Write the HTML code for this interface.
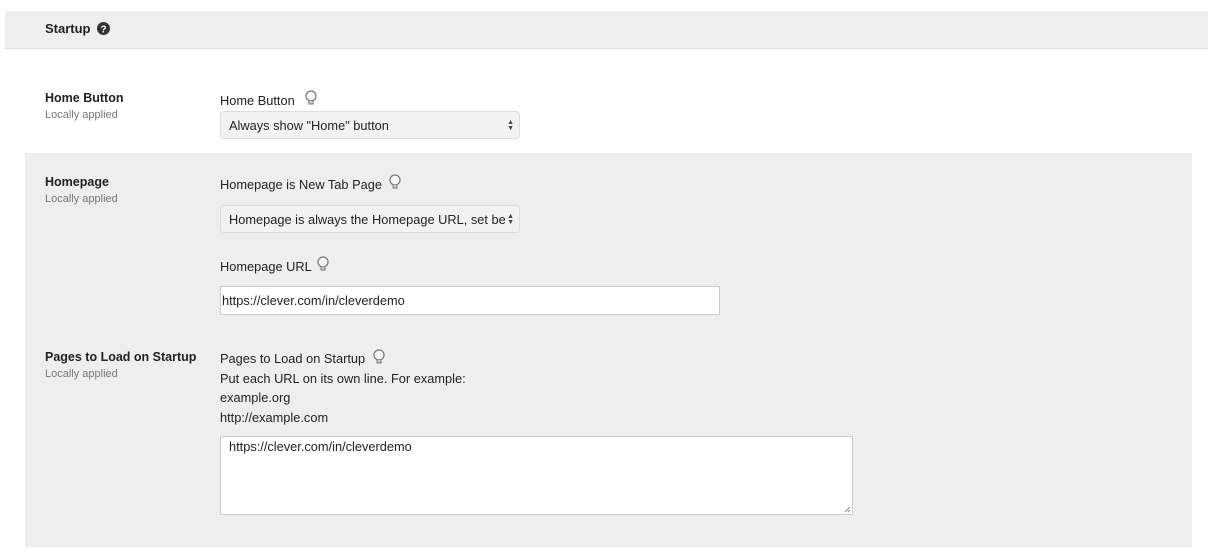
<!DOCTYPE html>
<html><head><meta charset="utf-8"><style>
*{margin:0;padding:0;box-sizing:border-box}
body{width:1208px;height:558px;background:#fff;font-family:"Liberation Sans",Arial,sans-serif;color:#222;position:relative;overflow:hidden;font-size:12.8px}
.a{position:absolute;white-space:nowrap}
.hdr{position:absolute;left:5px;top:11px;width:1203px;height:38px;background:#eee;border-bottom:1px solid #ddd}
.gray{position:absolute;left:25px;top:153px;width:1167px;height:394px;background:#eee}
.lbl{font-weight:bold;font-size:12.5px;color:#222}
.sub{font-size:11px;color:#777}
.sel{position:absolute;left:220px;width:300px;height:28px;background:#f2f2f2;border:1px solid #ddd;border-radius:4px;font-size:12.8px;white-space:nowrap}
.sel .t{position:absolute;left:8px;top:6px;width:276px;overflow:hidden}
.arr{position:absolute;right:5px;top:8px;font-size:7px;line-height:6px;color:#444}
.inp{position:absolute;background:#fff;border:1px solid #ccc;font-size:12.8px;padding:6px 1px}
</style></head><body>
<div class="hdr"></div>
<div class="a" style="left:45px;top:21px;font-weight:bold;font-size:13px">Startup</div>
<svg class="a" style="left:97px;top:22px" width="13" height="13" viewBox="0 0 13 13"><circle cx="6.5" cy="6.5" r="6.5" fill="#333"/><text x="6.5" y="10.5" text-anchor="middle" fill="#fff" font-size="10" font-weight="bold" font-family="Liberation Sans">?</text></svg>
<div class="gray"></div>

<div class="a lbl" style="left:45px;top:91px">Home Button</div>
<div class="a sub" style="left:45px;top:109px">Locally applied</div>
<div class="a" style="left:220px;top:93px">Home Button</div>
<svg class="a" style="left:304px;top:90px" width="14" height="17" viewBox="0 0 14 17"><circle cx="7" cy="6" r="5" fill="#f6f6f6" stroke="#777" stroke-width="1.2"/><path d="M5 11v3h4v-3" fill="#ccc" stroke="#777"/></svg>
<div class="sel" style="top:111px"><span class="t">Always show "Home" button</span><span class="arr">▲<br>▼</span></div>

<div class="a lbl" style="left:45px;top:175px">Homepage</div>
<div class="a sub" style="left:45px;top:193px">Locally applied</div>
<div class="a" style="left:220px;top:177px">Homepage is New Tab Page</div>
<svg class="a" style="left:388px;top:174px" width="14" height="17" viewBox="0 0 14 17"><circle cx="7" cy="6" r="5" fill="#f6f6f6" stroke="#777" stroke-width="1.2"/><path d="M5 11v3h4v-3" fill="#ccc" stroke="#777"/></svg>
<div class="sel" style="top:205px"><span class="t">Homepage is always the Homepage URL, set below</span><span class="arr">▲<br>▼</span></div>

<div class="a" style="left:220px;top:259px">Homepage URL</div>
<svg class="a" style="left:316px;top:256px" width="14" height="17" viewBox="0 0 14 17"><circle cx="7" cy="6" r="5" fill="#f6f6f6" stroke="#777" stroke-width="1.2"/><path d="M5 11v3h4v-3" fill="#ccc" stroke="#777"/></svg>
<div class="inp" style="left:220px;top:286px;width:500px;height:29px">https://clever.com/in/cleverdemo</div>

<div class="a lbl" style="left:45px;top:350px">Pages to Load on Startup</div>
<div class="a sub" style="left:45px;top:368px">Locally applied</div>
<div class="a" style="left:220px;top:349px;line-height:19.5px">Pages to Load on Startup<br>Put each URL on its own line. For example:<br>example.org<br>http://example.com</div>
<svg class="a" style="left:372px;top:349px" width="14" height="17" viewBox="0 0 14 17"><circle cx="7" cy="6" r="5" fill="#f6f6f6" stroke="#777" stroke-width="1.2"/><path d="M5 11v3h4v-3" fill="#ccc" stroke="#777"/></svg>
<div class="inp" style="left:220px;top:436px;width:633px;height:79px;padding:2px 8px">https://clever.com/in/cleverdemo
<svg style="position:absolute;right:1px;bottom:1px" width="7" height="7"><path d="M1 6L6 1M4 6L6 4" stroke="#888"/></svg></div>
</body></html>
